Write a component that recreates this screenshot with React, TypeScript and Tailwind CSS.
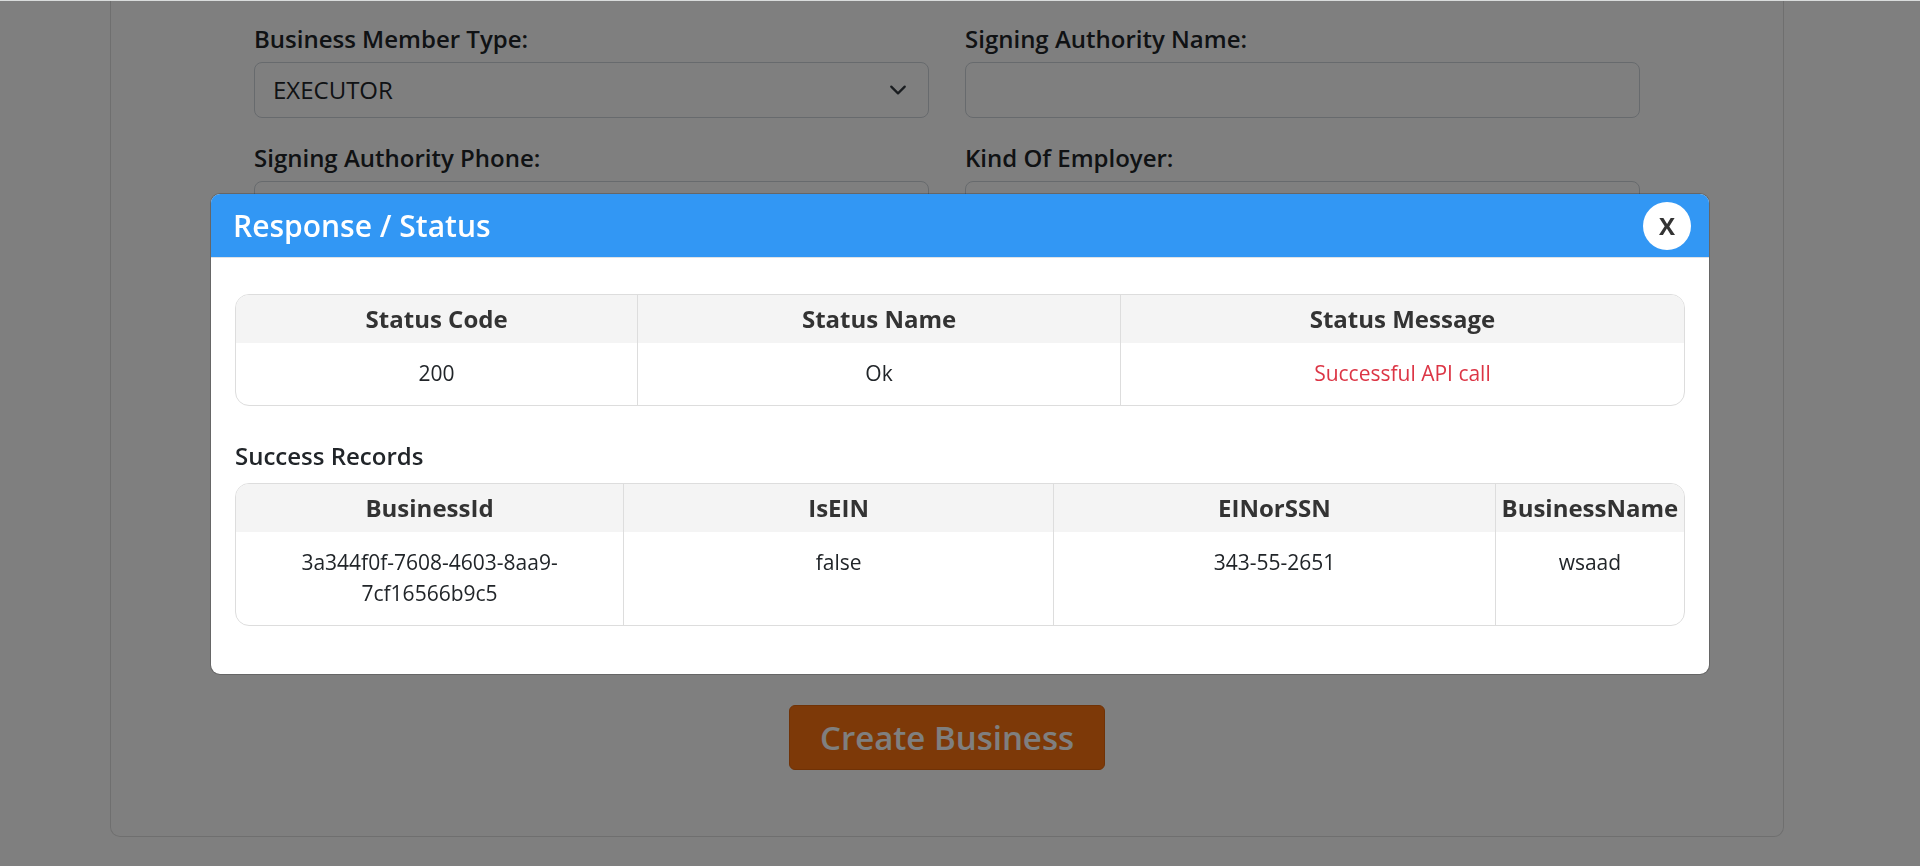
import { useState } from "react";

type Column = { title: string; value: string; width: string; tone?: string };

const statusColumns: Column[] = [
  { title: "Status Code", value: "200", width: "w-5/18" },
  { title: "Status Name", value: "Ok", width: "w-6/18" },
  { title: "Status Message", value: "Successful API call", width: "w-7/18", tone: "text-[#dc3545]" },
];

const recordColumns: Column[] = [
  { title: "BusinessId", value: "3a344f0f-7608-4603-8aa9-7cf16566b9c5", width: "w-[26.8%]" },
  { title: "IsEIN", value: "false", width: "w-[29.7%]" },
  { title: "EINorSSN", value: "343-55-2651", width: "w-[30.5%]" },
  { title: "BusinessName", value: "wsaad", width: "w-[13%]" },
];

function ResultTable({ columns, label }: { columns: Column[]; label: string }) {
  return (
    <div className="overflow-hidden rounded-[14px] border border-[#dddddd]">
      <table aria-label={label} className="w-full table-fixed border-separate border-spacing-0 text-center">
        <thead>
          <tr className="bg-[#f4f4f4]">
            {columns.map((c) => (
              <th
                key={c.title}
                scope="col"
                className={`${c.width} h-12 border-r border-[#dddddd] p-0 text-2xl font-bold text-[#333333] last:border-r-0`}
              >
                {c.title}
              </th>
            ))}
          </tr>
        </thead>
        <tbody>
          <tr>
            {columns.map((c) => (
              <td
                key={c.title}
                className={`border-r border-[#dddddd] px-12 pt-[15px] pb-4 align-top text-[21px] leading-[31px] font-normal last:border-r-0 last:px-4 ${c.tone ?? "text-[#212529]"}`}
              >
                {c.value}
              </td>
            ))}
          </tr>
        </tbody>
      </table>
    </div>
  );
}

const fieldClass =
  "h-14 w-full rounded-lg border border-[#ced4da] bg-white px-[18px] text-2xl font-normal text-[#212529] outline-none";

const labelClass = "mb-1.5 block text-2xl leading-[34px] font-semibold text-[#212529]";

function TextField({ id, label }: { id: string; label: string }) {
  return (
    <div>
      <label htmlFor={id} className={labelClass}>
        {label}
      </label>
      <input id={id} type="text" className={fieldClass} />
    </div>
  );
}

export default function App() {
  const [open, setOpen] = useState(true);

  return (
    <div className="min-h-screen bg-white pr-[26px] font-['Open_Sans',sans-serif]">
      <form
        onSubmit={(e) => {
          e.preventDefault();
          setOpen(true);
        }}
        className="mx-[110px] rounded-b-[10px] border border-t-0 border-[#dfdfdf] px-[143px] pt-[22px] pb-[66px]"
      >
        <div className="grid grid-cols-2 gap-x-9 gap-y-[23px]">
          <div>
            <label htmlFor="member-type" className={labelClass}>
              Business Member Type:
            </label>
            <div className="relative">
              <select id="member-type" defaultValue="EXECUTOR" className={`${fieldClass} appearance-none`}>
                <option>EXECUTOR</option>
              </select>
              <svg
                viewBox="0 0 16 16"
                fill="none"
                aria-hidden="true"
                className="pointer-events-none absolute top-1/2 right-[22px] size-[18px] -translate-y-1/2"
              >
                <path d="m2 5 6 6 6-6" stroke="#343a40" strokeWidth="2" strokeLinecap="round" strokeLinejoin="round" />
              </svg>
            </div>
          </div>
          <TextField id="authority-name" label="Signing Authority Name:" />
          <TextField id="authority-phone" label="Signing Authority Phone:" />
          <TextField id="employer-kind" label="Kind Of Employer:" />
        </div>
        <div className="mt-[468px] flex justify-center">
          <button
            type="submit"
            className="h-[65px] rounded-md border border-[#e0650c] bg-[#fb7210] px-[30px] text-[33px] leading-none font-semibold text-white"
          >
            Create Business
          </button>
        </div>
      </form>

      {open && (
        <div className="fixed inset-0 flex items-start justify-center overflow-auto border-t border-[#d9dcdc] bg-black/50 bg-clip-padding px-[210px] pt-48">
          <div
            role="dialog"
            aria-modal="true"
            aria-labelledby="dialog-title"
            className="w-full max-w-[1500px] overflow-hidden rounded-[10px] border border-black/20 bg-white bg-clip-padding"
          >
            <header className="flex h-16 items-center justify-between border-b border-[#dee2e6] bg-[#3297f4] pr-[18px] pl-[22px]">
              <h2 id="dialog-title" className="text-[30px] font-semibold text-white">
                Response / Status
              </h2>
              <button
                type="button"
                aria-label="Close"
                onClick={() => setOpen(false)}
                className="size-12 rounded-full bg-white text-2xl font-bold text-[#333333]"
              >
                X
              </button>
            </header>
            <div className="px-6 pt-9 pb-12">
              <ResultTable label="Response status" columns={statusColumns} />
              <h3 className="mt-8 mb-[9px] text-2xl leading-9 font-semibold text-[#212529]">Success Records</h3>
              <ResultTable label="Success records" columns={recordColumns} />
            </div>
          </div>
        </div>
      )}
    </div>
  );
}
